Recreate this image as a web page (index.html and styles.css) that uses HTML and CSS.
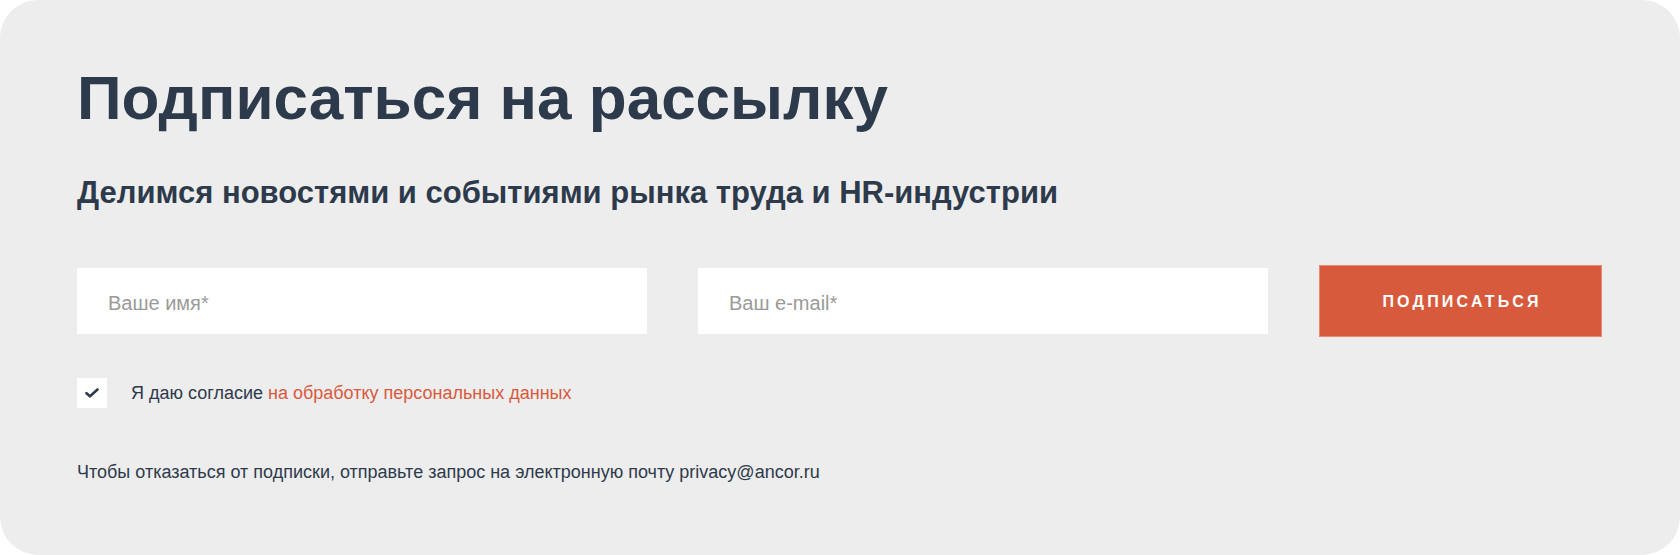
FILE: index.html
```html
<!DOCTYPE html>
<html lang="ru">
<head>
<meta charset="utf-8">
<title>Подписаться на рассылку</title>
<link rel="stylesheet" href="styles.css">
</head>
<body>
<section class="card">
  <h1 class="title">Подписаться на рассылку</h1>
  <h2 class="subtitle">Делимся новостями и событиями рынка труда и HR-индустрии</h2>
  <form class="form">
    <input class="field" type="text" placeholder="Ваше имя*">
    <input class="field" type="email" placeholder="Ваш e-mail*">
    <button class="btn" type="button">ПОДПИСАТЬСЯ</button>
  </form>
  <label class="consent">
    <span class="check">
      <svg width="14" height="10" viewBox="0 0 14 10"><path d="M1.5 5.2 L5 8.3 L12.5 1.5" fill="none" stroke="#2d3a4b" stroke-width="2.6" stroke-linecap="round" stroke-linejoin="round"/></svg>
    </span>
    <span class="consent-text">Я даю согласие <a class="link" href="#">на обработку персональных данных</a></span>
  </label>
  <p class="note">Чтобы отказаться от подписки, отправьте запрос на электронную почту privacy@ancor.ru</p>
</section>
</body>
</html>
```

FILE: styles.css
```css
* { box-sizing: border-box; }
html, body { margin: 0; padding: 0; background: #ffffff; }
body {
  font-family: "Liberation Sans", Arial, sans-serif;
  color: #2d3a4b;
}
.card {
  width: 1680px;
  height: 555px;
  background: #ededed;
  border-radius: 38px;
  padding: 60px 78px 0 77px;
}
.title {
  margin: 0;
  font-size: 62px;
  line-height: 76px;
  font-weight: 700;
  color: #2d3a4b;
}
.subtitle {
  margin: 39px 0 0;
  font-size: 31px;
  line-height: 36px;
  font-weight: 700;
  color: #2d3a4b;
}
.form {
  margin-top: 54px;
  display: grid;
  grid-template-columns: 1fr 1fr 283px;
  column-gap: 51px;
  align-items: center;
  height: 72px;
}
.field {
  height: 66px;
  border: none;
  background: #ffffff;
  padding: 5px 31px 0;
  font-family: "Liberation Sans", Arial, sans-serif;
  font-size: 20px;
  color: #2d3a4b;
  outline: none;
  width: 100%;
}
.field::placeholder { color: #9a9a9a; }
.btn {
  height: 72px;
  border: 1px solid #e58a73;
  background: #d85a3d;
  color: #ffffff;
  font-family: "Liberation Sans", Arial, sans-serif;
  font-weight: 700;
  font-size: 16px;
  letter-spacing: 3.2px;
  padding: 2px 0 0 3px;
  cursor: pointer;
}
.consent {
  margin-top: 41px;
  display: flex;
  align-items: center;
  gap: 24px;
  height: 30px;
}
.check {
  width: 30px;
  height: 30px;
  background: #ffffff;
  display: flex;
  align-items: center;
  justify-content: center;
}
.consent-text {
  font-size: 18px;
  color: #2d3a4b;
}
.link {
  color: #d9593d;
  text-decoration: none;
}
.note {
  margin: 54px 0 0;
  font-size: 18px;
  line-height: 20px;
  color: #2d3a4b;
}
```
